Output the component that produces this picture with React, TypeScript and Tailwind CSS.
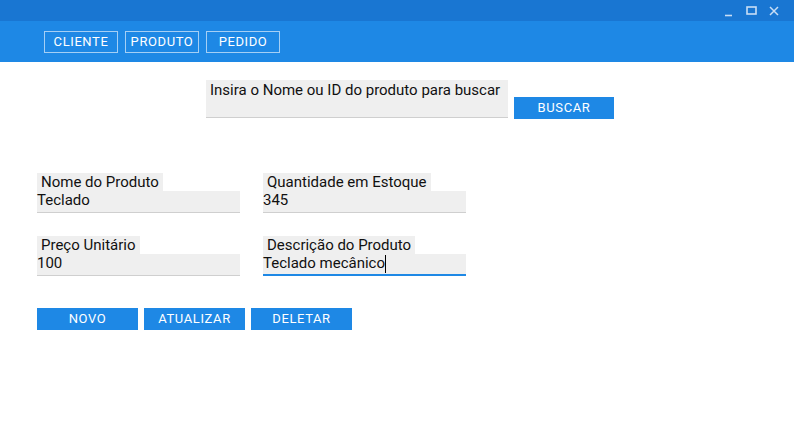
import React from "react";

const navItems = ["CLIENTE", "PRODUTO", "PEDIDO"];

interface FieldProps {
  label: string;
  value: string;
  focused?: boolean;
}

const Field: React.FC<FieldProps> = ({ label, value, focused }) => (
  <div className="flex flex-col w-[203px]">
    <span className="self-start bg-[#efefef] px-[4px] h-[18px] leading-[18px] text-[15px] text-[#111]">
      {label}
    </span>
    <div
      className={
        focused
          ? "h-[22px] bg-[#efefef] border-b-2 border-[#1e88e5] text-[15px] leading-[19px] text-[#111] flex items-start"
          : "h-[22px] bg-[#efefef] border-b border-[#cfcfcf] text-[15px] leading-[19px] text-[#111] flex items-start"
      }
    >
      <span>{value}</span>
      {focused && <span className="w-px h-[18px] mt-[1px] bg-black"></span>}
    </div>
  </div>
);

export default function App() {
  return (
    <div className="w-[794px] h-[424px] bg-white overflow-hidden font-['Roboto',sans-serif]">
      {/* title bar */}
      <div className="h-[21px] bg-[#1976d2] flex items-center justify-end pr-[15px] gap-[12px]">
        <svg width="10" height="10" viewBox="0 0 10 10" className="mt-[2px]">
          <line x1="2" y1="8.5" x2="9" y2="8.5" stroke="#c8def5" strokeWidth="1.6" />
        </svg>
        <svg width="12" height="10" viewBox="0 0 12 10">
          <rect x="2" y="1" width="9" height="7" fill="none" stroke="#c8def5" strokeWidth="1.6" />
        </svg>
        <svg width="10" height="10" viewBox="0 0 10 10">
          <path d="M1 1 L9 9 M9 1 L1 9" stroke="#c8def5" strokeWidth="1.5" />
        </svg>
      </div>

      {/* nav */}
      <div className="h-[41px] bg-[#1e88e5] flex items-start pl-[44px] pt-[10px] gap-[7px]">
        {navItems.map((item) => (
          <button
            key={item}
            className="w-[74px] h-[22px] border border-white/60 text-white text-[13px] tracking-[0.6px] leading-[20px]"
          >
            {item}
          </button>
        ))}
      </div>

      {/* search */}
      <div className="flex items-start pl-[206px] pt-[18px]">
        <div className="w-[302px] h-[38px] bg-[#efefef] border-b border-[#cfcfcf] px-[4px] pt-[1px] text-[15px] leading-[18px] text-[#111]">
          Insira o Nome ou ID do produto para buscar
        </div>
        <button className="ml-[6px] mt-[17px] w-[100px] h-[22px] bg-[#1e88e5] text-white text-[13px] tracking-[0.6px]">
          BUSCAR
        </button>
      </div>

      {/* form */}
      <div className="grid grid-cols-[203px_203px] gap-x-[23px] gap-y-[23px] pl-[37px] pt-[54px]">
        <Field label="Nome do Produto" value="Teclado" />
        <Field label="Quantidade em Estoque" value="345" />
        <Field label="Preço Unitário" value="100" />
        <Field label="Descrição do Produto" value="Teclado mecânico" focused />
      </div>

      {/* actions */}
      <div className="flex gap-[6px] pl-[37px] pt-[32px]">
        {["NOVO", "ATUALIZAR", "DELETAR"].map((item) => (
          <button
            key={item}
            className="w-[101px] h-[22px] bg-[#1e88e5] text-white text-[13px] tracking-[0.6px]"
          >
            {item}
          </button>
        ))}
      </div>
    </div>
  );
}
